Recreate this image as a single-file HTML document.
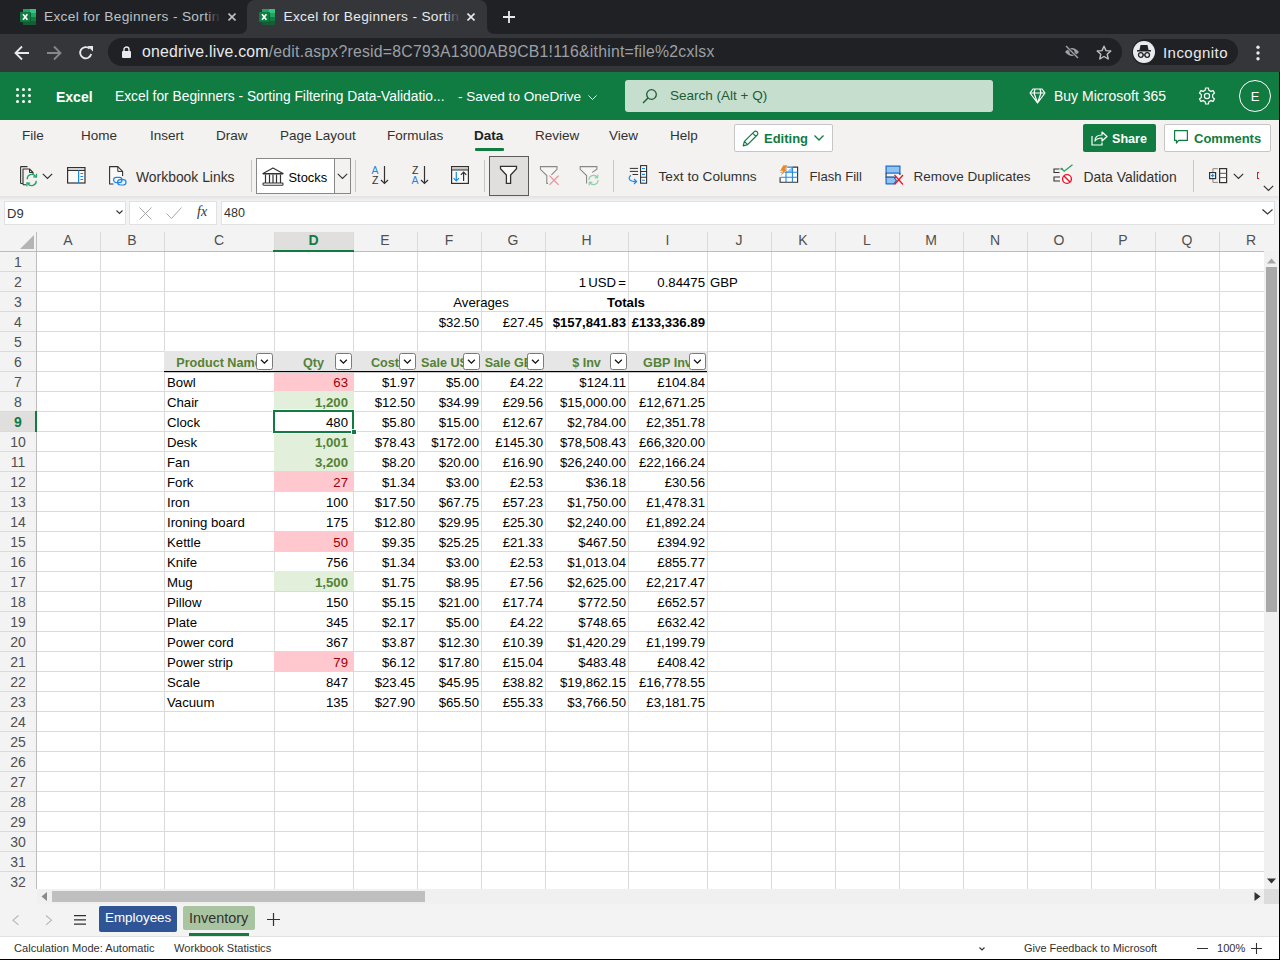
<!DOCTYPE html>
<html><head><meta charset="utf-8"><title>Excel</title>
<style>
*{box-sizing:border-box;margin:0;padding:0}
html,body{width:1280px;height:960px;overflow:hidden;background:#fff;font-family:"Liberation Sans",sans-serif}
.a{position:absolute}
.t{white-space:nowrap;position:absolute}
#tabbar{left:0;top:0;width:1280px;height:34px;background:#202124}
#toolbar{left:0;top:34px;width:1280px;height:38px;background:#35363a}
#hdr{left:0;top:72px;width:1280px;height:48px;background:#107c41}
#ribtabs{left:0;top:120px;width:1280px;height:36px;background:#f3f2f1}
#ribcmd{left:0;top:156px;width:1280px;height:40px;background:#f3f2f1}
#fbar{left:0;top:196px;width:1280px;height:36px;background:#f3f3f3}
#grid{left:0;top:232px;width:1264px;height:657px;background:#fff;overflow:hidden}
#tabs{left:0;top:904px;width:1280px;height:32px;background:#f3f3f3}
#status{left:0;top:936px;width:1280px;height:24px;background:#fff;border-top:1px solid #e1e1e1}
.vl{top:0;width:1px;height:657px;background:#dadada}
.hs{top:1px;width:1px;height:18px;background:#dadada}
.hl{left:0;width:1264px;height:1px;background:#dadada}
.ch{top:-1.5px;height:19px;line-height:19px;text-align:center;font-size:14px;color:#505050}
.ch.sel{color:#107c41;font-weight:bold}
.rh{left:0;width:36px;height:20px;line-height:20px;text-align:center;font-size:14px;color:#505050;margin-top:1px}
.rh.sel{color:#107c41;font-weight:bold}
.c{height:20px;line-height:20px;font-size:13.2px;color:#000;white-space:nowrap;overflow:hidden}
.c.r{text-align:right;padding-right:2px}
.c.r.pd{padding-right:5px}
.c.l{text-align:left;padding-left:2px}
.c.ctr{text-align:center}
.b{font-weight:bold}
.red{color:#9c0006}
.grn{color:#548235;font-weight:bold}
.th{color:#548235;font-weight:bold;font-size:12.6px}
.fb{width:17px;height:17px;background:#fff;border:1px solid #7a7a7a;border-radius:2.5px}
.rt{top:8px;font-size:13.5px;color:#323130}
.rc{top:12.5px;font-size:13.6px;color:#323130}
.st{top:4.5px;font-size:11.1px;color:#323130}

</style></head><body>
<div id="tabbar" class="a">
  <!-- inactive tab -->
  <svg class="a" style="left:20px;top:9px" width="16" height="16" viewBox="0 0 16 16">
    <rect x="3" y="0" width="13" height="16" fill="#21a366"/><rect x="10" y="0" width="6" height="4" fill="#33c481"/><rect x="3" y="8" width="13" height="4" fill="#107c41"/><rect x="3" y="12" width="13" height="4" fill="#185c37"/>
    <rect x="0.6" y="3.4" width="10.4" height="10" fill="#0a5c2c"/><rect x="0" y="3" width="10.2" height="9.8" rx="0.6" fill="#107c41"/><path d="M3 5.2 L7.4 10.8 M7.4 5.2 L3 10.8" stroke="#fff" stroke-width="1.6" fill="none"/>
  </svg>
  <div class="t" style="left:44px;top:9px;font-size:13.7px;color:#bdc1c6;letter-spacing:0.32px">Excel for Beginners - Sortin</div>
  <div class="a" style="left:206px;top:6px;width:16px;height:20px;background:linear-gradient(90deg,rgba(32,33,36,0),rgba(32,33,36,0.8) 60%,rgba(32,33,36,0.85))"></div>
  <svg class="a" style="left:228px;top:13px" width="8" height="8"><path d="M0.5 0.5 L7.5 7.5 M7.5 0.5 L0.5 7.5" stroke="#bdc1c6" stroke-width="1.6"/></svg>
  <!-- active tab -->
  <div class="a" style="left:247px;top:0;width:240px;height:36px;background:#35363a;border-radius:8px 8px 0 0"></div>
  <svg class="a" style="left:239px;top:26px" width="8" height="8"><path d="M0 8 Q8 8 8 0 L8 8 Z" fill="#35363a"/></svg>
  <svg class="a" style="left:487px;top:26px" width="8" height="8"><path d="M8 8 Q0 8 0 0 L0 8 Z" fill="#35363a"/></svg>
  <svg class="a" style="left:259px;top:9px" width="16" height="16" viewBox="0 0 16 16">
    <rect x="3" y="0" width="13" height="16" fill="#21a366"/><rect x="10" y="0" width="6" height="4" fill="#33c481"/><rect x="3" y="8" width="13" height="4" fill="#107c41"/><rect x="3" y="12" width="13" height="4" fill="#185c37"/>
    <rect x="0.6" y="3.4" width="10.4" height="10" fill="#0a5c2c"/><rect x="0" y="3" width="10.2" height="9.8" rx="0.6" fill="#107c41"/><path d="M3 5.2 L7.4 10.8 M7.4 5.2 L3 10.8" stroke="#fff" stroke-width="1.6" fill="none"/>
  </svg>
  <div class="t" style="left:283.5px;top:9px;font-size:13.7px;color:#e8eaed;letter-spacing:0.32px">Excel for Beginners - Sortin</div>
  <div class="a" style="left:445px;top:6px;width:16px;height:20px;background:linear-gradient(90deg,rgba(53,54,58,0),rgba(53,54,58,0.8) 60%,rgba(53,54,58,0.85))"></div>
  <svg class="a" style="left:467px;top:13px" width="8" height="8"><path d="M0.5 0.5 L7.5 7.5 M7.5 0.5 L0.5 7.5" stroke="#e8eaed" stroke-width="1.6"/></svg>
  <svg class="a" style="left:502px;top:10px" width="14" height="14"><path d="M7 1 V13 M1 7 H13" stroke="#e8eaed" stroke-width="1.8"/></svg>
</div>
<div id="toolbar" class="a">
  <svg class="a" style="left:14px;top:11px" width="16" height="16" viewBox="0 0 16 16"><path d="M15 8 H2 M8 1.5 L1.5 8 L8 14.5" stroke="#e8eaed" stroke-width="1.8" fill="none"/></svg>
  <svg class="a" style="left:46px;top:11px" width="16" height="16" viewBox="0 0 16 16"><path d="M1 8 H14 M8 1.5 L14.5 8 L8 14.5" stroke="#86888c" stroke-width="1.8" fill="none"/></svg>
  <svg class="a" style="left:78px;top:11px" width="16" height="16" viewBox="0 0 16 16"><path d="M13.2 9 A5.6 5.6 0 1 1 11.6 3.6" stroke="#e8eaed" stroke-width="1.8" fill="none"/><path d="M9.5 1 L15 1 L15 6.5 Z" fill="#e8eaed"/></svg>
  <div class="a" style="left:108px;top:4px;width:1014px;height:28px;border-radius:14px;background:#202124"></div>
  <svg class="a" style="left:122px;top:12px" width="9" height="12" viewBox="0 0 9 12"><path d="M2 5 V3.5 A2.5 2.5 0 0 1 7 3.5 V5" stroke="#e8eaed" stroke-width="1.4" fill="none"/><rect x="0" y="5" width="9" height="7" rx="1" fill="#e8eaed"/></svg>
  <div class="t" style="left:142px;top:9px;font-size:15.8px;color:#e8eaed;letter-spacing:0.22px">onedrive.live.com<span style="color:#9aa0a6">/edit.aspx?resid=8C793A1300AB9CB1!116&amp;ithint=file%2cxlsx</span></div>
  <svg class="a" style="left:1064px;top:11px" width="16" height="14" viewBox="0 0 16 14"><path d="M1 7 Q8 -1 15 7 Q8 15 1 7 Z" fill="#9aa0a6"/><circle cx="8" cy="7" r="2.5" fill="#202124"/><path d="M2 1 L14 13" stroke="#202124" stroke-width="2.6"/><path d="M2 1 L14 13" stroke="#9aa0a6" stroke-width="1.4"/></svg>
  <svg class="a" style="left:1096px;top:11px" width="16" height="15" viewBox="0 0 16 15"><path d="M8 1.2 L10 5.6 L14.8 6 L11.2 9.2 L12.2 14 L8 11.5 L3.8 14 L4.8 9.2 L1.2 6 L6 5.6 Z" stroke="#bdc1c6" stroke-width="1.4" fill="none" stroke-linejoin="round"/></svg>
  <div class="a" style="left:1132px;top:5px;width:106px;height:26px;border-radius:13px;background:#202124"></div>
  <div class="a" style="left:1133px;top:7px;width:22px;height:22px;border-radius:11px;background:#e8eaed"></div>
  <svg class="a" style="left:1136px;top:10px" width="16" height="16" viewBox="0 0 16 16"><path d="M4.5 1 L11.5 1 L12.5 6 L3.5 6 Z" fill="#202124"/><rect x="1" y="6" width="14" height="1.5" fill="#202124"/><circle cx="4.8" cy="11" r="2.3" stroke="#202124" stroke-width="1.3" fill="none"/><circle cx="11.2" cy="11" r="2.3" stroke="#202124" stroke-width="1.3" fill="none"/><path d="M7 11 H9" stroke="#202124" stroke-width="1.2"/></svg>
  <div class="t" style="left:1163px;top:9.5px;font-size:15px;color:#e8eaed;letter-spacing:0.45px">Incognito</div>
  <svg class="a" style="left:1255px;top:11px" width="6" height="16"><circle cx="3" cy="2.2" r="1.7" fill="#e8eaed"/><circle cx="3" cy="8" r="1.7" fill="#e8eaed"/><circle cx="3" cy="13.8" r="1.7" fill="#e8eaed"/></svg>
</div>
<div id="hdr" class="a">
  <svg class="a" style="left:15px;top:16px" width="17" height="17"><g fill="#fff"><circle cx="2.5" cy="1.6" r="1.5"/><circle cx="8.5" cy="1.6" r="1.5"/><circle cx="14.5" cy="1.6" r="1.5"/><circle cx="2.5" cy="7.6" r="1.5"/><circle cx="8.5" cy="7.6" r="1.5"/><circle cx="14.5" cy="7.6" r="1.5"/><circle cx="2.5" cy="13.5" r="1.5"/><circle cx="8.5" cy="13.5" r="1.5"/><circle cx="14.5" cy="13.5" r="1.5"/></g></svg>
  <div class="t" style="left:56px;top:17px;font-size:14px;font-weight:bold;color:#fff">Excel</div>
  <div class="t" style="left:115px;top:17px;font-size:13.8px;color:#fff">Excel for Beginners - Sorting Filtering Data-Validatio...</div>
  <div class="t" style="left:458px;top:17px;font-size:13.6px;color:#fff">- Saved to OneDrive</div>
  <svg class="a" style="left:588px;top:23px" width="9" height="6"><path d="M0.5 0.5 L4.5 4.5 L8.5 0.5" stroke="#fff" stroke-width="1" fill="none"/></svg>
  <div class="a" style="left:625px;top:8px;width:368px;height:32px;border-radius:3px;background:#c6dece"></div>
  <svg class="a" style="left:642px;top:16px" width="16" height="16" viewBox="0 0 16 16"><circle cx="9.5" cy="6.5" r="4.8" stroke="#1d5c35" stroke-width="1.3" fill="none"/><path d="M6 10 L1 15" stroke="#1d5c35" stroke-width="1.4"/></svg>
  <div class="t" style="left:670px;top:16px;font-size:13.5px;color:#1d5c35">Search (Alt + Q)</div>
  <svg class="a" style="left:1029px;top:16px" width="17" height="16" viewBox="0 0 17 16"><path d="M4 1 H13 L16 5 L8.5 15 L1 5 Z M1 5 H16 M6 1 L5 5 L8.5 15 L12 5 L11 1" stroke="#fff" stroke-width="1.2" fill="none" stroke-linejoin="round"/></svg>
  <div class="t" style="left:1054px;top:16px;font-size:14px;color:#fff">Buy Microsoft 365</div>
  <svg class="a" style="left:1198px;top:15px" width="18" height="18" viewBox="0 0 18 18"><path d="M7.6 1 H10.4 L10.9 3.3 L12.9 4.4 L15.1 3.6 L16.5 6 L14.7 7.6 V10.4 L16.5 12 L15.1 14.4 L12.9 13.6 L10.9 14.7 L10.4 17 H7.6 L7.1 14.7 L5.1 13.6 L2.9 14.4 L1.5 12 L3.3 10.4 V7.6 L1.5 6 L2.9 3.6 L5.1 4.4 L7.1 3.3 Z" stroke="#fff" stroke-width="1.2" fill="none" stroke-linejoin="round"/><circle cx="9" cy="9" r="2.6" stroke="#fff" stroke-width="1.2" fill="none"/></svg>
  <div class="a" style="left:1239px;top:8px;width:32px;height:32px;border-radius:16px;border:1px solid #fff"></div>
  <div class="t" style="left:1239px;top:17px;width:32px;text-align:center;font-size:13px;color:#fff">E</div>
</div>
<div id="ribtabs" class="a">
  <div class="t rt" style="left:22px">File</div>
  <div class="t rt" style="left:81px">Home</div>
  <div class="t rt" style="left:150px">Insert</div>
  <div class="t rt" style="left:216px">Draw</div>
  <div class="t rt" style="left:280px">Page Layout</div>
  <div class="t rt" style="left:387px">Formulas</div>
  <div class="t rt" style="left:474px;font-weight:bold;color:#201f1e">Data</div>
  <div class="a" style="left:475px;top:28px;width:29px;height:3px;border-radius:1px;background:#107c41"></div>
  <div class="t rt" style="left:535px">Review</div>
  <div class="t rt" style="left:609px">View</div>
  <div class="t rt" style="left:670px">Help</div>
  <div class="a" style="left:734px;top:4px;width:99px;height:28px;border:1px solid #c8c6c4;border-radius:2px;background:#fff"></div>
  <svg class="a" style="left:742px;top:10px" width="17" height="17" viewBox="0 0 17 17"><path d="M1.2 15.8 L2.4 11.4 L12 1.8 A1.7 1.7 0 0 1 15.2 5 L5.6 14.6 Z M10.6 3.2 L13.8 6.4 M2.4 11.4 L5.6 14.6" stroke="#107c41" stroke-width="1.2" fill="none" stroke-linejoin="round"/></svg>
  <div class="t" style="left:764px;top:10.5px;font-size:13px;font-weight:bold;color:#107c41">Editing</div>
  <svg class="a" style="left:814px;top:15px" width="10" height="6"><path d="M0.5 0.5 L5 5 L9.5 0.5" stroke="#107c41" stroke-width="1.3" fill="none"/></svg>
  <div class="a" style="left:1083px;top:4px;width:73px;height:28px;border-radius:2px;background:#107c41"></div>
  <svg class="a" style="left:1091px;top:10px" width="17" height="16" viewBox="0 0 17 16"><path d="M1 6 V15 H11 V12.5" stroke="#fff" stroke-width="1.2" fill="none"/><path d="M4 11 Q4 5 11 5 V2 L16 6.5 L11 11 V8 Q6 8 4 11 Z" stroke="#fff" stroke-width="1.2" fill="none" stroke-linejoin="round"/></svg>
  <div class="t" style="left:1112px;top:11.5px;font-size:12.6px;font-weight:bold;color:#fff">Share</div>
  <div class="a" style="left:1164px;top:4px;width:107px;height:28px;border:1px solid #c8c6c4;border-radius:2px;background:#fff"></div>
  <svg class="a" style="left:1174px;top:10px" width="16" height="16" viewBox="0 0 16 16"><path d="M0.6 0.6 H13.4 V10.4 H4.6 L2.4 13 V10.4 H0.6 Z" stroke="#107c41" stroke-width="1.2" fill="none" stroke-linejoin="round"/></svg>
  <div class="t" style="left:1194px;top:11px;font-size:13px;font-weight:bold;color:#107c41">Comments</div>
</div>
<div id="ribcmd" class="a">
  <!-- refresh all -->
  <svg class="a" style="left:20px;top:10px" width="20" height="21" viewBox="0 0 20 21">
    <path d="M0.6 0.6 H7.5 M0.6 0.6 V17.5 M0.6 17.5 H3" stroke="#323130" stroke-width="1.1" fill="none"/>
    <path d="M3 18.8 V3 H9.5 L13 6.5 V8.5 M3 18.8 H6" stroke="#323130" stroke-width="1.1" fill="none" stroke-linejoin="round"/>
    <path d="M9.5 3 V6.5 H13" stroke="#323130" stroke-width="1" fill="none"/>
    <path d="M7.2 13.2 A4.6 4.6 0 0 1 15.6 10.4 M16.2 14.8 A4.6 4.6 0 0 1 7.8 17.6" stroke="#21a366" stroke-width="1.3" fill="none"/>
    <path d="M13.2 10.8 L16.4 11 L16.6 7.8 M10.2 17.2 L7 17 L6.8 20.2" stroke="#21a366" stroke-width="1.3" fill="none"/>
  </svg>
  <svg class="a" style="left:42px;top:17px" width="11" height="7"><path d="M0.8 0.8 L5.5 5.5 L10.2 0.8" stroke="#323130" stroke-width="1.2" fill="none"/></svg>
  <!-- queries pane -->
  <svg class="a" style="left:67px;top:11px" width="19" height="17" viewBox="0 0 19 17">
    <rect x="0.6" y="0.6" width="17.4" height="15.4" fill="#fafafa" stroke="#323130" stroke-width="1.2"/>
    <path d="M0.6 3.4 H18" stroke="#323130" stroke-width="1.2"/>
    <path d="M11.6 3.4 V16" stroke="#1e88e5" stroke-width="1.2"/>
    <path d="M13.4 6.5 H16.2 M13.4 9.5 H16.2 M13.4 12.5 H16.2" stroke="#1e88e5" stroke-width="1.2"/>
  </svg>
  <!-- workbook links -->
  <svg class="a" style="left:109px;top:10px" width="18" height="20" viewBox="0 0 18 20">
    <path d="M4.5 18 H0.6 V0.6 H8.8 L13.6 5.4 V10" stroke="#323130" stroke-width="1.1" fill="#fafafa" stroke-linejoin="round"/>
    <path d="M8.8 0.6 V5.4 H13.6" stroke="#323130" stroke-width="1" fill="none"/>
    <rect x="4.6" y="11.3" width="8.4" height="5.4" rx="2.7" stroke="#1e88e5" stroke-width="1.2" fill="none"/>
    <rect x="8.6" y="13.6" width="8.4" height="5.4" rx="2.7" stroke="#1e88e5" stroke-width="1.2" fill="none"/>
  </svg>
  <div class="t rc" style="left:136px;font-size:13.9px">Workbook Links</div>
  <div class="a" style="left:251px;top:4px;width:1px;height:32px;background:#c8c6c4"></div>
  <!-- stocks -->
  <div class="a" style="left:256px;top:2px;width:95px;height:36px;border:1px solid #8a8886;background:#fff"></div>
  <div class="a" style="left:334px;top:3px;width:16px;height:34px;border-left:1px solid #8a8886;background:#f3f2f1"></div>
  <svg class="a" style="left:262px;top:11px" width="22" height="19" viewBox="0 0 22 19">
    <path d="M1 6.5 L11 1 L21 6.5 Z" stroke="#323130" stroke-width="1.1" fill="#fff" stroke-linejoin="round"/>
    <path d="M0.8 6.8 H21.2" stroke="#323130" stroke-width="1.4"/>
    <path d="M3.5 7.5 V16 M7.5 7.5 V16 M11 7.5 V16 M14.5 7.5 V16 M18.5 7.5 V16" stroke="#323130" stroke-width="1.2"/>
    <rect x="1" y="16" width="20" height="2.2" rx="0.8" stroke="#323130" stroke-width="1.1" fill="#fff"/>
  </svg>
  <div class="t rc" style="left:288.5px;color:#000;font-size:12.9px;top:13.5px">Stocks</div>
  <svg class="a" style="left:337px;top:17px" width="11" height="7"><path d="M0.8 0.8 L5.5 5.5 L10.2 0.8" stroke="#323130" stroke-width="1.1" fill="none"/></svg>
  <div class="a" style="left:355px;top:4px;width:1px;height:32px;background:#c8c6c4"></div>
  <!-- sort az -->
  <div class="t" style="left:371.5px;top:9px;font-size:10.5px;color:#1e88e5;line-height:10px">A</div>
  <div class="t" style="left:372px;top:19px;font-size:10.5px;color:#323130;line-height:10px">Z</div>
  <svg class="a" style="left:380px;top:10px" width="9" height="19"><path d="M4.5 0 V17.5 M1 14 L4.5 17.5 L8 14" stroke="#323130" stroke-width="1.2" fill="none"/></svg>
  <!-- sort za -->
  <div class="t" style="left:412px;top:9px;font-size:10.5px;color:#323130;line-height:10px">Z</div>
  <div class="t" style="left:411.5px;top:19px;font-size:10.5px;color:#1e88e5;line-height:10px">A</div>
  <svg class="a" style="left:420px;top:10px" width="9" height="19"><path d="M4.5 0 V17.5 M1 14 L4.5 17.5 L8 14" stroke="#323130" stroke-width="1.2" fill="none"/></svg>
  <!-- custom sort -->
  <svg class="a" style="left:451px;top:10px" width="18" height="18" viewBox="0 0 18 18">
    <rect x="0.6" y="0.6" width="16.8" height="16.8" fill="#fafafa" stroke="#323130" stroke-width="1.2"/>
    <rect x="1.2" y="1.2" width="15.6" height="2.6" fill="#c8c6c4"/>
    <path d="M0.6 4 H17.4" stroke="#323130" stroke-width="1"/>
    <path d="M5.3 6 V15 M2.6 12.2 L5.3 15 L8 12.2" stroke="#1e88e5" stroke-width="1.2" fill="none"/>
    <path d="M12.6 15 V6 M9.9 8.8 L12.6 6 L15.3 8.8" stroke="#323130" stroke-width="1.2" fill="none"/>
  </svg>
  <div class="a" style="left:484px;top:4px;width:1px;height:32px;background:#c8c6c4"></div>
  <!-- filter -->
  <div class="a" style="left:489px;top:0px;width:40px;height:40px;border:1.5px solid #5c5b5a;background:#e1dfdd"></div>
  <svg class="a" style="left:499px;top:9px" width="20" height="21" viewBox="0 0 20 21"><path d="M1.5 1.4 H17.5 V3.8 L11.6 10 V18.4 H7.4 V10 L1.5 3.8 Z" stroke="#323130" stroke-width="1.3" fill="#fafafa" stroke-linejoin="miter"/></svg>
  <!-- clear -->
  <svg class="a" style="left:535px;top:4px" width="30" height="32" viewBox="535 160 30 32">
    <path d="M551.4 174.8 L557 169.3 V166.6 H540.4 V169.3 L546.8 175.5 V183.4 H548" stroke="#8a8886" stroke-width="1.1" fill="#f5f5f5" stroke-linejoin="miter"/>
    <path d="M549.4 175.6 L558.6 184.8 M558.6 175.6 L549.4 184.8" stroke="#f28b93" stroke-width="1.2"/>
  </svg>
  <!-- reapply -->
  <svg class="a" style="left:575px;top:4px" width="30" height="32" viewBox="575 160 30 32">
    <path d="M592.2 172.4 L596.9 169.3 V166.6 H580.2 V169.3 L586.6 175.5 V183.4" stroke="#8a8886" stroke-width="1.1" fill="#f5f5f5" stroke-linejoin="miter"/>
    <path d="M588.9 180 A4.6 4.6 0 0 1 597.3 177.4 M598.1 180 A4.6 4.6 0 0 1 589.7 182.6" stroke="#8fd0a8" stroke-width="1.2" fill="none"/>
    <path d="M594.6 177.6 L597.6 177.8 L597.8 174.6 M592.4 182.4 L589.4 182.2 L589.2 185.4" stroke="#8fd0a8" stroke-width="1.2" fill="none"/>
  </svg>
  <div class="a" style="left:613px;top:4px;width:1px;height:32px;background:#c8c6c4"></div>
  <!-- text to columns -->
  <svg class="a" style="left:625px;top:4px" width="25" height="32" viewBox="625 160 25 32">
    <path d="M629.8 168.4 H638.1 M629.8 171.4 H638.1 M632.5 174.5 H638.1" stroke="#323130" stroke-width="1"/>
    <rect x="640.6" y="165.6" width="6" height="17.6" fill="#fff" stroke="#323130" stroke-width="1.1"/>
    <path d="M640.6 171.5 H646.6 M640.6 177.3 H646.6" stroke="#323130" stroke-width="1.1"/>
    <path d="M642 168.5 H645 M642 174.4 H645 M642 180.3 H645" stroke="#1e88e5" stroke-width="1.1"/>
    <path d="M630.8 175.2 Q627.6 178.2 630.6 180.6 Q632.6 181.8 636.4 181.5 M634 179 L636.6 181.5 L634 184" stroke="#1e88e5" stroke-width="1.2" fill="none"/>
  </svg>
  <div class="t rc" style="left:658.5px;font-size:13.7px">Text to Columns</div>
  <!-- flash fill -->
  <svg class="a" style="left:775px;top:6px" width="28" height="30" viewBox="775 162 28 30">
    <rect x="780" y="167" width="17.6" height="15.3" fill="#fff"/>
    <path d="M786 172.2 L792.4 167 V172.2 Z" fill="#90c4f0"/>
    <path d="M792.4 167.1 H797.6 V182.3 H780.1 V177.3" stroke="#323130" stroke-width="1.1" fill="none"/>
    <path d="M786 167.1 H792.4 M786 167 V182.3 M792.4 167 V182.3 M780.5 172.2 H797.6 M780.5 177.3 H797.6" stroke="#1e88e5" stroke-width="1.1" fill="none"/>
    <path d="M783.2 165 H788 L785.6 169.2 H787.8 L780.2 176.5 L782.6 171 H779.6 Z" fill="#ed8a1f" stroke="#f3f2f1" stroke-width="0.6"/>
  </svg>
  <div class="t rc" style="left:809.5px;font-size:13.1px">Flash Fill</div>
  <!-- remove duplicates -->
  <svg class="a" style="left:885px;top:9px" width="19" height="21" viewBox="0 0 19 21">
    <rect x="1.1" y="1.1" width="13.8" height="7" fill="#90c4f0" stroke="#1e66c2" stroke-width="1.2"/>
    <path d="M1.1 8.1 V12.2 H11" stroke="#323130" stroke-width="1.1" fill="none"/>
    <path d="M14.9 8.1 V10" stroke="#323130" stroke-width="1.1"/>
    <path d="M1.1 12.2 V18.8 H9 L11.4 15.5 L9 12.2 Z" fill="#90c4f0" stroke="#1e66c2" stroke-width="1.2" stroke-linejoin="round"/>
    <path d="M9.5 10 L18 19.5 M18 10 L9.5 19.5" stroke="#e81123" stroke-width="1.2"/>
  </svg>
  <div class="t rc" style="left:913.5px;font-size:13.5px">Remove Duplicates</div>
  <!-- data validation -->
  <svg class="a" style="left:1053px;top:8px" width="21" height="21" viewBox="0 0 21 21">
    <path d="M6.5 5 H1 V8.5 H6.5 M10 5 H7.5" stroke="#323130" stroke-width="1.1" fill="none"/>
    <path d="M7 13 H1 V17 H7" stroke="#323130" stroke-width="1.1" fill="none"/>
    <path d="M8 4 L11.2 7.2 L19.5 0.7" stroke="#21a366" stroke-width="1.3" fill="none"/>
    <circle cx="14" cy="15" r="4.4" stroke="#e81123" stroke-width="1.4" fill="#fff"/>
    <path d="M11 12 L17 18" stroke="#e81123" stroke-width="1.4"/>
  </svg>
  <div class="t rc" style="left:1083.5px;font-size:13.9px">Data Validation</div>
  <div class="a" style="left:1193px;top:4px;width:1px;height:32px;background:#c8c6c4"></div>
  <!-- consolidate -->
  <svg class="a" style="left:1205px;top:8px" width="26" height="24" viewBox="1205 164 26 24">
    <path d="M1212.9 172 V168.7 H1218 M1212.9 179 V182.4 H1218" stroke="#8a8886" stroke-width="1" fill="none"/>
    <rect x="1209.6" y="172.6" width="6" height="6" fill="#fff" stroke="#323130" stroke-width="1.2"/>
    <path d="M1212.6 173.9 V177.3 M1210.9 175.6 H1214.3" stroke="#1e88e5" stroke-width="1.3"/>
    <rect x="1219.6" y="168.6" width="7" height="14" fill="#fafafa" stroke="#323130" stroke-width="1.2"/>
    <path d="M1219.6 173.3 H1226.6 M1219.6 177.6 H1226.6" stroke="#555" stroke-width="1"/>
  </svg>
  <svg class="a" style="left:1233px;top:17px" width="11" height="7"><path d="M0.8 0.8 L5.5 5.5 L10.2 0.8" stroke="#323130" stroke-width="1.2" fill="none"/></svg>
  <div class="a" style="left:1256.8px;top:16px;width:2.4px;height:6.8px;border:1.4px solid #e81123;border-right:none"></div>
  <svg class="a" style="left:1263px;top:29px" width="11" height="7"><path d="M0.8 0.8 L5.5 5.5 L10.2 0.8" stroke="#323130" stroke-width="1.2" fill="none"/></svg>
</div>
<div id="fbar" class="a">
  <div class="a" style="left:0;top:0;width:1280px;height:5px;background:linear-gradient(rgba(0,0,0,0.07),rgba(0,0,0,0))"></div>
  <div class="a" style="left:4px;top:5px;width:122px;height:24px;border:1px solid #e1e1e1;background:#fff"></div>
  <div class="t" style="left:7px;top:10px;font-size:13px;color:#333">D9</div>
  <svg class="a" style="left:116px;top:14px" width="7" height="5"><path d="M0.5 0.5 L3.5 3.5 L6.5 0.5" stroke="#333" stroke-width="1.1" fill="none"/></svg>
  <div class="a" style="left:129px;top:5px;width:88px;height:24px;border:1px solid #e1e1e1;background:#fff"></div>
    <svg class="a" style="left:138.5px;top:10.5px" width="13" height="13"><path d="M0.5 0.5 L12.5 12.5 M12.5 0.5 L0.5 12.5" stroke="#a6a6a6" stroke-width="1"/></svg>
  <svg class="a" style="left:166px;top:11px" width="16" height="12"><path d="M0.5 6.5 L5.5 11.5 L15.5 0.5" stroke="#a6a6a6" stroke-width="1" fill="none"/></svg>
  <div class="t" style="left:197px;top:8px;font-size:14px;font-style:italic;font-family:'Liberation Serif',serif;color:#333">fx</div>
  <div class="a" style="left:221px;top:5px;width:1054px;height:24px;border:1px solid #e1e1e1;background:#fff"></div>
  <div class="t" style="left:224px;top:10px;font-size:12.5px;color:#333">480</div>
  <svg class="a" style="left:1262px;top:12.5px" width="11" height="6"><path d="M0.5 0.5 L5.5 5 L10.5 0.5" stroke="#333" stroke-width="1.2" fill="none"/></svg>
</div>
<div id="grid" class="a">
<div class="a" style="left:0;top:0;width:1264px;height:19px;background:#f3f3f3"></div>
<div class="a" style="left:0;top:0;width:36px;height:657px;background:#f3f3f3"></div>
<div class="a" style="left:274px;top:0;width:79px;height:19px;background:#e1dfdd"></div>
<div class="a" style="left:0;top:179px;width:36px;height:20px;background:#e1dfdd"></div>
<div class="a ch" style="left:36px;width:64px">A</div>
<div class="a vl" style="left:100px"></div>
<div class="a ch" style="left:100px;width:64px">B</div>
<div class="a vl" style="left:164px"></div>
<div class="a ch" style="left:164px;width:110px">C</div>
<div class="a vl" style="left:274px"></div>
<div class="a ch sel" style="left:274px;width:79px">D</div>
<div class="a vl" style="left:353px"></div>
<div class="a ch" style="left:353px;width:64px">E</div>
<div class="a vl" style="left:417px"></div>
<div class="a ch" style="left:417px;width:64px">F</div>
<div class="a vl" style="left:481px"></div>
<div class="a ch" style="left:481px;width:64px">G</div>
<div class="a vl" style="left:545px"></div>
<div class="a ch" style="left:545px;width:83px">H</div>
<div class="a vl" style="left:628px"></div>
<div class="a ch" style="left:628px;width:79px">I</div>
<div class="a vl" style="left:707px"></div>
<div class="a ch" style="left:707px;width:64px">J</div>
<div class="a vl" style="left:771px"></div>
<div class="a ch" style="left:771px;width:64px">K</div>
<div class="a vl" style="left:835px"></div>
<div class="a ch" style="left:835px;width:64px">L</div>
<div class="a vl" style="left:899px"></div>
<div class="a ch" style="left:899px;width:64px">M</div>
<div class="a vl" style="left:963px"></div>
<div class="a ch" style="left:963px;width:64px">N</div>
<div class="a vl" style="left:1027px"></div>
<div class="a ch" style="left:1027px;width:64px">O</div>
<div class="a vl" style="left:1091px"></div>
<div class="a ch" style="left:1091px;width:64px">P</div>
<div class="a vl" style="left:1155px"></div>
<div class="a ch" style="left:1155px;width:64px">Q</div>
<div class="a vl" style="left:1219px"></div>
<div class="a ch" style="left:1219px;width:64px">R</div>
<div class="a hs" style="left:36px"></div>
<div class="a hs" style="left:100px"></div>
<div class="a hs" style="left:164px"></div>
<div class="a hs" style="left:274px"></div>
<div class="a hs" style="left:353px"></div>
<div class="a hs" style="left:417px"></div>
<div class="a hs" style="left:481px"></div>
<div class="a hs" style="left:545px"></div>
<div class="a hs" style="left:628px"></div>
<div class="a hs" style="left:707px"></div>
<div class="a hs" style="left:771px"></div>
<div class="a hs" style="left:835px"></div>
<div class="a hs" style="left:899px"></div>
<div class="a hs" style="left:963px"></div>
<div class="a hs" style="left:1027px"></div>
<div class="a hs" style="left:1091px"></div>
<div class="a hs" style="left:1155px"></div>
<div class="a hs" style="left:1219px"></div>
<div class="a hl" style="top:39px"></div>
<div class="a hl" style="top:59px"></div>
<div class="a hl" style="top:79px"></div>
<div class="a hl" style="top:99px"></div>
<div class="a hl" style="top:119px"></div>
<div class="a hl" style="top:139px"></div>
<div class="a hl" style="top:159px"></div>
<div class="a hl" style="top:179px"></div>
<div class="a hl" style="top:199px"></div>
<div class="a hl" style="top:219px"></div>
<div class="a hl" style="top:239px"></div>
<div class="a hl" style="top:259px"></div>
<div class="a hl" style="top:279px"></div>
<div class="a hl" style="top:299px"></div>
<div class="a hl" style="top:319px"></div>
<div class="a hl" style="top:339px"></div>
<div class="a hl" style="top:359px"></div>
<div class="a hl" style="top:379px"></div>
<div class="a hl" style="top:399px"></div>
<div class="a hl" style="top:419px"></div>
<div class="a hl" style="top:439px"></div>
<div class="a hl" style="top:459px"></div>
<div class="a hl" style="top:479px"></div>
<div class="a hl" style="top:499px"></div>
<div class="a hl" style="top:519px"></div>
<div class="a hl" style="top:539px"></div>
<div class="a hl" style="top:559px"></div>
<div class="a hl" style="top:579px"></div>
<div class="a hl" style="top:599px"></div>
<div class="a hl" style="top:619px"></div>
<div class="a hl" style="top:639px"></div>
<div class="a hl" style="top:659px"></div>
<div class="a hl" style="top:679px"></div>
<div class="a" style="left:0;top:19px;width:1264px;height:1px;background:#bdbdbd"></div>
<div class="a" style="left:36px;top:0;width:1px;height:657px;background:#bdbdbd"></div>
<div class="a rh" style="top:19px">1</div>
<div class="a rh" style="top:39px">2</div>
<div class="a rh" style="top:59px">3</div>
<div class="a rh" style="top:79px">4</div>
<div class="a rh" style="top:99px">5</div>
<div class="a rh" style="top:119px">6</div>
<div class="a rh" style="top:139px">7</div>
<div class="a rh" style="top:159px">8</div>
<div class="a rh sel" style="top:179px">9</div>
<div class="a rh" style="top:199px">10</div>
<div class="a rh" style="top:219px">11</div>
<div class="a rh" style="top:239px">12</div>
<div class="a rh" style="top:259px">13</div>
<div class="a rh" style="top:279px">14</div>
<div class="a rh" style="top:299px">15</div>
<div class="a rh" style="top:319px">16</div>
<div class="a rh" style="top:339px">17</div>
<div class="a rh" style="top:359px">18</div>
<div class="a rh" style="top:379px">19</div>
<div class="a rh" style="top:399px">20</div>
<div class="a rh" style="top:419px">21</div>
<div class="a rh" style="top:439px">22</div>
<div class="a rh" style="top:459px">23</div>
<div class="a rh" style="top:479px">24</div>
<div class="a rh" style="top:499px">25</div>
<div class="a rh" style="top:519px">26</div>
<div class="a rh" style="top:539px">27</div>
<div class="a rh" style="top:559px">28</div>
<div class="a rh" style="top:579px">29</div>
<div class="a rh" style="top:599px">30</div>
<div class="a rh" style="top:619px">31</div>
<div class="a rh" style="top:639px">32</div>
<svg class="a" style="left:20px;top:2.5px" width="14" height="14"><path d="M14 0 L14 14 L0 14 Z" fill="#b4b4b4"/></svg>
<div class="a" style="left:274px;top:139px;width:80px;height:20px;background:#ffc7ce"></div>
<div class="a" style="left:274px;top:159px;width:80px;height:20px;background:#e2efda"></div>
<div class="a" style="left:274px;top:199px;width:80px;height:20px;background:#e2efda"></div>
<div class="a" style="left:274px;top:219px;width:80px;height:20px;background:#e2efda"></div>
<div class="a" style="left:274px;top:239px;width:80px;height:20px;background:#ffc7ce"></div>
<div class="a" style="left:274px;top:299px;width:80px;height:20px;background:#ffc7ce"></div>
<div class="a" style="left:274px;top:339px;width:80px;height:20px;background:#e2efda"></div>
<div class="a" style="left:274px;top:419px;width:80px;height:20px;background:#ffc7ce"></div>
<div class="a" style="left:164px;top:119px;width:543px;height:20px;background:#e7e6e6"></div>
<div class="a" style="left:164px;top:139px;width:543px;height:1px;background:#000"></div>
<div class="a" style="left:164px;top:140px;width:543px;height:1px;background:#c8c8c8"></div>
<div class="a c r " style="left:546px;top:41px;width:82px;word-spacing:-1.5px">1 USD =</div>
<div class="a c r " style="left:629px;top:41px;width:78px;">0.84475</div>
<div class="a c l " style="left:708px;top:41px;width:63px;">GBP</div>
<div class="a c ctr" style="left:417px;top:61px;width:128px">Averages</div>
<div class="a c ctr b" style="left:545px;top:61px;width:162px">Totals</div>
<div class="a c r " style="left:418px;top:81px;width:63px;">$32.50</div>
<div class="a c r " style="left:482px;top:81px;width:63px;">£27.45</div>
<div class="a c r b" style="left:546px;top:81px;width:82px;">$157,841.83</div>
<div class="a c r b" style="left:629px;top:81px;width:78px;">£133,336.89</div>
<div class="a" style="left:164px;top:121px;width:92px;height:18px;overflow:hidden"><div class="a c th" style="left:0;top:0;width:110px;text-align:center">Product Name</div></div>
<div class="a fb" style="left:256px;top:121px"><svg width="15" height="15" style="position:absolute;left:0;top:0"><path d="M4 5.8 L7.4 9.2 L10.8 5.8" stroke="#111" stroke-width="1.3" fill="none"/></svg></div>
<div class="a" style="left:274px;top:121px;width:61px;height:18px;overflow:hidden"><div class="a c th" style="left:0;top:0;width:79px;text-align:center">Qty</div></div>
<div class="a fb" style="left:335px;top:121px"><svg width="15" height="15" style="position:absolute;left:0;top:0"><path d="M4 5.8 L7.4 9.2 L10.8 5.8" stroke="#111" stroke-width="1.3" fill="none"/></svg></div>
<div class="a" style="left:353px;top:121px;width:46px;height:18px;overflow:hidden"><div class="a c th" style="left:0;top:0;width:64px;text-align:center">Cost</div></div>
<div class="a fb" style="left:399px;top:121px"><svg width="15" height="15" style="position:absolute;left:0;top:0"><path d="M4 5.8 L7.4 9.2 L10.8 5.8" stroke="#111" stroke-width="1.3" fill="none"/></svg></div>
<div class="a" style="left:417px;top:121px;width:46px;height:18px;overflow:hidden"><div class="a c th" style="left:0;top:0;width:64px;text-align:center">Sale USD</div></div>
<div class="a fb" style="left:463px;top:121px"><svg width="15" height="15" style="position:absolute;left:0;top:0"><path d="M4 5.8 L7.4 9.2 L10.8 5.8" stroke="#111" stroke-width="1.3" fill="none"/></svg></div>
<div class="a" style="left:481px;top:121px;width:46px;height:18px;overflow:hidden"><div class="a c th" style="left:0;top:0;width:64px;text-align:center">Sale GBP</div></div>
<div class="a fb" style="left:527px;top:121px"><svg width="15" height="15" style="position:absolute;left:0;top:0"><path d="M4 5.8 L7.4 9.2 L10.8 5.8" stroke="#111" stroke-width="1.3" fill="none"/></svg></div>
<div class="a" style="left:545px;top:121px;width:65px;height:18px;overflow:hidden"><div class="a c th" style="left:0;top:0;width:83px;text-align:center">$ Inv</div></div>
<div class="a fb" style="left:610px;top:121px"><svg width="15" height="15" style="position:absolute;left:0;top:0"><path d="M4 5.8 L7.4 9.2 L10.8 5.8" stroke="#111" stroke-width="1.3" fill="none"/></svg></div>
<div class="a" style="left:628px;top:121px;width:61px;height:18px;overflow:hidden"><div class="a c th" style="left:0;top:0;width:79px;text-align:center">GBP Inv</div></div>
<div class="a fb" style="left:689px;top:121px"><svg width="15" height="15" style="position:absolute;left:0;top:0"><path d="M4 5.8 L7.4 9.2 L10.8 5.8" stroke="#111" stroke-width="1.3" fill="none"/></svg></div>
<div class="a c l " style="left:165px;top:141px;width:109px;">Bowl</div>
<div class="a c r red pd" style="left:275px;top:141px;width:78px;">63</div>
<div class="a c r " style="left:354px;top:141px;width:63px;">$1.97</div>
<div class="a c r " style="left:418px;top:141px;width:63px;">$5.00</div>
<div class="a c r " style="left:482px;top:141px;width:63px;">£4.22</div>
<div class="a c r " style="left:546px;top:141px;width:82px;">$124.11</div>
<div class="a c r " style="left:629px;top:141px;width:78px;">£104.84</div>
<div class="a c l " style="left:165px;top:161px;width:109px;">Chair</div>
<div class="a c r grn pd" style="left:275px;top:161px;width:78px;">1,200</div>
<div class="a c r " style="left:354px;top:161px;width:63px;">$12.50</div>
<div class="a c r " style="left:418px;top:161px;width:63px;">$34.99</div>
<div class="a c r " style="left:482px;top:161px;width:63px;">£29.56</div>
<div class="a c r " style="left:546px;top:161px;width:82px;">$15,000.00</div>
<div class="a c r " style="left:629px;top:161px;width:78px;">£12,671.25</div>
<div class="a c l " style="left:165px;top:181px;width:109px;">Clock</div>
<div class="a c r  pd" style="left:275px;top:181px;width:78px;">480</div>
<div class="a c r " style="left:354px;top:181px;width:63px;">$5.80</div>
<div class="a c r " style="left:418px;top:181px;width:63px;">$15.00</div>
<div class="a c r " style="left:482px;top:181px;width:63px;">£12.67</div>
<div class="a c r " style="left:546px;top:181px;width:82px;">$2,784.00</div>
<div class="a c r " style="left:629px;top:181px;width:78px;">£2,351.78</div>
<div class="a c l " style="left:165px;top:201px;width:109px;">Desk</div>
<div class="a c r grn pd" style="left:275px;top:201px;width:78px;">1,001</div>
<div class="a c r " style="left:354px;top:201px;width:63px;">$78.43</div>
<div class="a c r " style="left:418px;top:201px;width:63px;">$172.00</div>
<div class="a c r " style="left:482px;top:201px;width:63px;">£145.30</div>
<div class="a c r " style="left:546px;top:201px;width:82px;">$78,508.43</div>
<div class="a c r " style="left:629px;top:201px;width:78px;">£66,320.00</div>
<div class="a c l " style="left:165px;top:221px;width:109px;">Fan</div>
<div class="a c r grn pd" style="left:275px;top:221px;width:78px;">3,200</div>
<div class="a c r " style="left:354px;top:221px;width:63px;">$8.20</div>
<div class="a c r " style="left:418px;top:221px;width:63px;">$20.00</div>
<div class="a c r " style="left:482px;top:221px;width:63px;">£16.90</div>
<div class="a c r " style="left:546px;top:221px;width:82px;">$26,240.00</div>
<div class="a c r " style="left:629px;top:221px;width:78px;">£22,166.24</div>
<div class="a c l " style="left:165px;top:241px;width:109px;">Fork</div>
<div class="a c r red pd" style="left:275px;top:241px;width:78px;">27</div>
<div class="a c r " style="left:354px;top:241px;width:63px;">$1.34</div>
<div class="a c r " style="left:418px;top:241px;width:63px;">$3.00</div>
<div class="a c r " style="left:482px;top:241px;width:63px;">£2.53</div>
<div class="a c r " style="left:546px;top:241px;width:82px;">$36.18</div>
<div class="a c r " style="left:629px;top:241px;width:78px;">£30.56</div>
<div class="a c l " style="left:165px;top:261px;width:109px;">Iron</div>
<div class="a c r  pd" style="left:275px;top:261px;width:78px;">100</div>
<div class="a c r " style="left:354px;top:261px;width:63px;">$17.50</div>
<div class="a c r " style="left:418px;top:261px;width:63px;">$67.75</div>
<div class="a c r " style="left:482px;top:261px;width:63px;">£57.23</div>
<div class="a c r " style="left:546px;top:261px;width:82px;">$1,750.00</div>
<div class="a c r " style="left:629px;top:261px;width:78px;">£1,478.31</div>
<div class="a c l " style="left:165px;top:281px;width:109px;">Ironing board</div>
<div class="a c r  pd" style="left:275px;top:281px;width:78px;">175</div>
<div class="a c r " style="left:354px;top:281px;width:63px;">$12.80</div>
<div class="a c r " style="left:418px;top:281px;width:63px;">$29.95</div>
<div class="a c r " style="left:482px;top:281px;width:63px;">£25.30</div>
<div class="a c r " style="left:546px;top:281px;width:82px;">$2,240.00</div>
<div class="a c r " style="left:629px;top:281px;width:78px;">£1,892.24</div>
<div class="a c l " style="left:165px;top:301px;width:109px;">Kettle</div>
<div class="a c r red pd" style="left:275px;top:301px;width:78px;">50</div>
<div class="a c r " style="left:354px;top:301px;width:63px;">$9.35</div>
<div class="a c r " style="left:418px;top:301px;width:63px;">$25.25</div>
<div class="a c r " style="left:482px;top:301px;width:63px;">£21.33</div>
<div class="a c r " style="left:546px;top:301px;width:82px;">$467.50</div>
<div class="a c r " style="left:629px;top:301px;width:78px;">£394.92</div>
<div class="a c l " style="left:165px;top:321px;width:109px;">Knife</div>
<div class="a c r  pd" style="left:275px;top:321px;width:78px;">756</div>
<div class="a c r " style="left:354px;top:321px;width:63px;">$1.34</div>
<div class="a c r " style="left:418px;top:321px;width:63px;">$3.00</div>
<div class="a c r " style="left:482px;top:321px;width:63px;">£2.53</div>
<div class="a c r " style="left:546px;top:321px;width:82px;">$1,013.04</div>
<div class="a c r " style="left:629px;top:321px;width:78px;">£855.77</div>
<div class="a c l " style="left:165px;top:341px;width:109px;">Mug</div>
<div class="a c r grn pd" style="left:275px;top:341px;width:78px;">1,500</div>
<div class="a c r " style="left:354px;top:341px;width:63px;">$1.75</div>
<div class="a c r " style="left:418px;top:341px;width:63px;">$8.95</div>
<div class="a c r " style="left:482px;top:341px;width:63px;">£7.56</div>
<div class="a c r " style="left:546px;top:341px;width:82px;">$2,625.00</div>
<div class="a c r " style="left:629px;top:341px;width:78px;">£2,217.47</div>
<div class="a c l " style="left:165px;top:361px;width:109px;">Pillow</div>
<div class="a c r  pd" style="left:275px;top:361px;width:78px;">150</div>
<div class="a c r " style="left:354px;top:361px;width:63px;">$5.15</div>
<div class="a c r " style="left:418px;top:361px;width:63px;">$21.00</div>
<div class="a c r " style="left:482px;top:361px;width:63px;">£17.74</div>
<div class="a c r " style="left:546px;top:361px;width:82px;">$772.50</div>
<div class="a c r " style="left:629px;top:361px;width:78px;">£652.57</div>
<div class="a c l " style="left:165px;top:381px;width:109px;">Plate</div>
<div class="a c r  pd" style="left:275px;top:381px;width:78px;">345</div>
<div class="a c r " style="left:354px;top:381px;width:63px;">$2.17</div>
<div class="a c r " style="left:418px;top:381px;width:63px;">$5.00</div>
<div class="a c r " style="left:482px;top:381px;width:63px;">£4.22</div>
<div class="a c r " style="left:546px;top:381px;width:82px;">$748.65</div>
<div class="a c r " style="left:629px;top:381px;width:78px;">£632.42</div>
<div class="a c l " style="left:165px;top:401px;width:109px;">Power cord</div>
<div class="a c r  pd" style="left:275px;top:401px;width:78px;">367</div>
<div class="a c r " style="left:354px;top:401px;width:63px;">$3.87</div>
<div class="a c r " style="left:418px;top:401px;width:63px;">$12.30</div>
<div class="a c r " style="left:482px;top:401px;width:63px;">£10.39</div>
<div class="a c r " style="left:546px;top:401px;width:82px;">$1,420.29</div>
<div class="a c r " style="left:629px;top:401px;width:78px;">£1,199.79</div>
<div class="a c l " style="left:165px;top:421px;width:109px;">Power strip</div>
<div class="a c r red pd" style="left:275px;top:421px;width:78px;">79</div>
<div class="a c r " style="left:354px;top:421px;width:63px;">$6.12</div>
<div class="a c r " style="left:418px;top:421px;width:63px;">$17.80</div>
<div class="a c r " style="left:482px;top:421px;width:63px;">£15.04</div>
<div class="a c r " style="left:546px;top:421px;width:82px;">$483.48</div>
<div class="a c r " style="left:629px;top:421px;width:78px;">£408.42</div>
<div class="a c l " style="left:165px;top:441px;width:109px;">Scale</div>
<div class="a c r  pd" style="left:275px;top:441px;width:78px;">847</div>
<div class="a c r " style="left:354px;top:441px;width:63px;">$23.45</div>
<div class="a c r " style="left:418px;top:441px;width:63px;">$45.95</div>
<div class="a c r " style="left:482px;top:441px;width:63px;">£38.82</div>
<div class="a c r " style="left:546px;top:441px;width:82px;">$19,862.15</div>
<div class="a c r " style="left:629px;top:441px;width:78px;">£16,778.55</div>
<div class="a c l " style="left:165px;top:461px;width:109px;">Vacuum</div>
<div class="a c r  pd" style="left:275px;top:461px;width:78px;">135</div>
<div class="a c r " style="left:354px;top:461px;width:63px;">$27.90</div>
<div class="a c r " style="left:418px;top:461px;width:63px;">$65.50</div>
<div class="a c r " style="left:482px;top:461px;width:63px;">£55.33</div>
<div class="a c r " style="left:546px;top:461px;width:82px;">$3,766.50</div>
<div class="a c r " style="left:629px;top:461px;width:78px;">£3,181.75</div>
<div class="a" style="left:273px;top:178px;width:81px;height:23px;border:2px solid #107c41;box-shadow:0 0 0 1px #fff"></div>
<div class="a" style="left:351px;top:197px;width:6px;height:6px;background:#107c41;border:1px solid #fff"></div>
<div class="a" style="left:273px;top:18px;width:81px;height:2px;background:#107c41"></div>
<div class="a" style="left:35px;top:179px;width:2px;height:21px;background:#107c41"></div>
</div>
<!-- horizontal scrollbar -->
<div class="a" style="left:37px;top:889px;width:1227px;height:15px;background:#f0f0f0"></div>
<div class="a" style="left:1264px;top:889px;width:15px;height:15px;background:#dcdcdc"></div>
<svg class="a" style="left:41px;top:892px" width="7" height="9"><path d="M6 0 V9 L0.5 4.5 Z" fill="#8a8a8a"/></svg>
<div class="a" style="left:52px;top:891px;width:373px;height:11px;background:#bfbfbf"></div>
<svg class="a" style="left:1254px;top:892px" width="7" height="9"><path d="M0.5 0 V9 L6.5 4.5 Z" fill="#333"/></svg>
<div class="a" style="left:0;top:889px;width:37px;height:15px;background:#f3f3f3"></div>
<!-- vertical scrollbar -->
<div class="a" style="left:1264px;top:251px;width:15px;height:638px;background:#f0f0f0"></div>
<svg class="a" style="left:1267px;top:258px" width="9" height="6"><path d="M0 5.5 H9 L4.5 0.5 Z" fill="#a6a6a6"/></svg>
<div class="a" style="left:1266px;top:267px;width:11px;height:345px;background:#a8a8a8"></div>
<svg class="a" style="left:1267px;top:878px" width="9" height="6"><path d="M0 0.5 H9 L4.5 5.5 Z" fill="#333"/></svg>
<div class="a" style="left:1264px;top:232px;width:15px;height:19px;background:#f3f3f3"></div>
<!-- sheet tabs -->
<div id="tabs" class="a">
  <svg class="a" style="left:12px;top:10.5px" width="8" height="11"><path d="M6.5 0.5 L1 5.2 L6.5 9.9" stroke="#b5b5b5" stroke-width="1.1" fill="none"/></svg>
  <svg class="a" style="left:45px;top:10.5px" width="8" height="11"><path d="M1 0.5 L6.5 5.2 L1 9.9" stroke="#b5b5b5" stroke-width="1.1" fill="none"/></svg>
  <svg class="a" style="left:74px;top:11px" width="13" height="10"><path d="M0 0.7 H12 M0 4.9 H12 M0 9.1 H12" stroke="#323130" stroke-width="1.3"/></svg>
  <div class="a" style="left:99px;top:2px;width:78px;height:26px;border-radius:2px;background:#2f5597"></div>
  <div class="t" style="left:105px;top:6px;font-size:13.4px;color:#fff">Employees</div>
  <div class="a" style="left:183px;top:2px;width:72px;height:24px;border-radius:2px;background:#a9c4a0"></div>
  <div class="t" style="left:189px;top:5.5px;font-size:14.4px;color:#323130">Inventory</div>
  <div class="a" style="left:189px;top:29px;width:60px;height:3px;background:#107c41"></div>
  <svg class="a" style="left:267px;top:9px" width="13" height="13"><path d="M6.5 0 V13 M0 6.5 H13" stroke="#323130" stroke-width="1.2"/></svg>
</div>
<div id="status" class="a">
  <div class="t st" style="left:14px">Calculation Mode: Automatic</div>
  <div class="t st" style="left:174px">Workbook Statistics</div>
  <svg class="a" style="left:979px;top:10px" width="6" height="4"><path d="M0.5 0.5 L3 3 L5.5 0.5" stroke="#323130" stroke-width="1.1" fill="none"/></svg>
  <div class="t st" style="left:1024px;font-size:10.95px">Give Feedback to Microsoft</div>
  <div class="a" style="left:1197px;top:11px;width:11px;height:1px;background:#323130"></div>
  <div class="t st" style="left:1217px">100%</div>
  <svg class="a" style="left:1251px;top:6px" width="11" height="11"><path d="M5.5 0 V11 M0 5.5 H11" stroke="#323130" stroke-width="1.1"/></svg>
</div>
<div class="a" style="left:1279px;top:72px;width:1px;height:888px;background:#000"></div>
<div class="a" style="left:0;top:959px;width:1280px;height:1px;background:#000"></div>
</body></html>
